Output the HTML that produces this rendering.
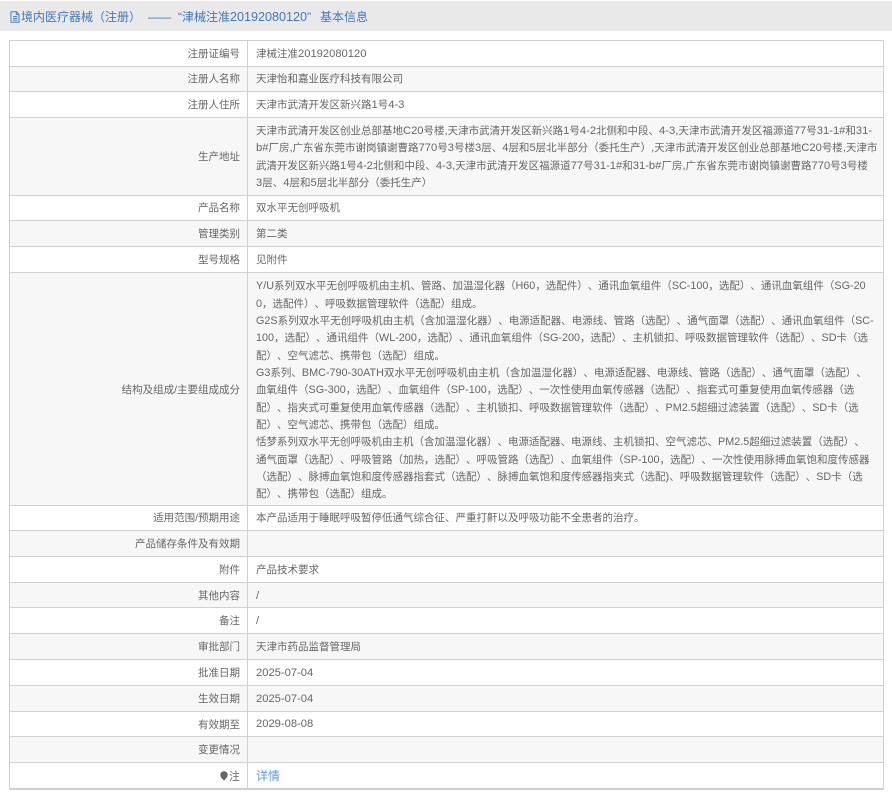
<!DOCTYPE html>
<html lang="zh">
<head>
<meta charset="utf-8">
<style>
html,body{margin:0;padding:0;background:#fff;}
body{width:892px;height:799px;position:relative;overflow:hidden;font-family:"Liberation Sans","Noto Sans CJK SC",sans-serif;font-size:10.5px;color:#666;text-spacing-trim:space-all;}
.head{position:absolute;left:0;top:1px;width:892px;height:30px;background:#e9e9e9;}
.head div{position:absolute;top:1px;line-height:30px;font-size:12px;color:#3f79bb;white-space:nowrap;}
.head i{font-size:12.6px;}
.head svg{position:absolute;left:10px;top:10px;}
.r{position:absolute;left:9px;width:875px;box-sizing:border-box;border:1px solid #d0d0d0;border-bottom:0;background:#fff;}
.r.g{background:#f7f7f7;}
.l{position:absolute;left:0;top:0;bottom:0;width:237px;border-right:1px solid #d0d0d0;white-space:nowrap;display:flex;align-items:center;justify-content:flex-end;}
.l span{margin-right:7px;}
.v{position:absolute;left:246px;top:0;bottom:0;display:flex;align-items:center;white-space:nowrap;}
.s .l span,.s .v>*{position:relative;top:-1px;}
.v .p{position:relative;top:1px;}
.m{display:block;line-height:17.33px;white-space:nowrap;}
i{font-style:normal;font-size:11.2px;line-height:1;}
b{font-weight:normal;font-size:10.8px;line-height:1;}
.bot{position:absolute;left:9px;top:788px;width:875px;height:2px;background:#cfcfcf;}
a{color:#5b9bec;text-decoration:none;font-size:12px;}
</style>
</head>
<body>
<div class="head">
<svg width="10" height="12" viewBox="0 0 10 12"><path d="M1 .8h5.500L9 3.300v7.900H1zM6.300 1v2.500H9M3 5.500h4.200M3 7.500h4.200M3 9.300h4.200" fill="none" stroke="#4a80bd" stroke-width="1"/></svg>
<div style="left:21px">境内医疗器械（注册）</div>
<div style="left:148px;letter-spacing:-1px">——</div>
<div style="left:178px">“津械注准<i>20192080120</i>”</div>
<div style="left:320px">基本信息</div>
</div>

<div class="r" style="top:40px;height:26px"><div class="l"><span>注册证编号</span></div><div class="v"><span>津械注准<i>20192080120</i></span></div></div>
<div class="r g s" style="top:66px;height:25px"><div class="l"><span>注册人名称</span></div><div class="v"><span>天津怡和嘉业医疗科技有限公司</span></div></div>
<div class="r" style="top:91px;height:26px"><div class="l"><span>注册人住所</span></div><div class="v"><span>天津市武清开发区新兴路<i>1</i>号<i>4-3</i></span></div></div>
<div class="r g" style="top:117px;height:78px"><div class="l"><span>生产地址</span></div><div class="v"><div style="position:relative;top:1px">
<span class="m">天津市武清开发区创业总部基地<i>C20</i>号楼<i>,</i>天津市武清开发区新兴路<i>1</i>号<i>4-2</i>北侧和中段、<i>4-3,</i>天津市武清开发区福源道<i>77</i>号<i>31-1#</i>和<i>31-</i></span>
<span class="m"><i>b#</i>厂房<i>,</i>广东省东莞市谢岗镇谢曹路<i>770</i>号<i>3</i>号楼<i>3</i>层、<i>4</i>层和<i>5</i>层北半部分（委托生产）<i>,</i>天津市武清开发区创业总部基地<i>C20</i>号楼<i>,</i>天津市</span>
<span class="m">武清开发区新兴路<i>1</i>号<i>4-2</i>北侧和中段、<i>4-3,</i>天津市武清开发区福源道<i>77</i>号<i>31-1#</i>和<i>31-b#</i>厂房<i>,</i>广东省东莞市谢岗镇谢曹路<i>770</i>号<i>3</i>号楼</span>
<span class="m"><i>3</i>层、<i>4</i>层和<i>5</i>层北半部分（委托生产）</span>
</div></div></div>
<div class="r s" style="top:195px;height:25px"><div class="l"><span>产品名称</span></div><div class="v"><span>双水平无创呼吸机</span></div></div>
<div class="r g" style="top:220px;height:26px"><div class="l"><span>管理类别</span></div><div class="v"><span>第二类</span></div></div>
<div class="r" style="top:246px;height:26px"><div class="l"><span>型号规格</span></div><div class="v"><span>见附件</span></div></div>
<div class="r g" style="top:272px;height:233px"><div class="l"><span>结构及组成/主要组成成分</span></div><div class="v"><div style="position:relative;top:2px">
<span class="m"><b>Y/U</b>系列双水平无创呼吸机由主机、管路、加温湿化器（<b>H60</b>，选配件）、通讯血氧组件（<b>SC-100</b>，选配）、通讯血氧组件（<b>SG-20</b></span>
<span class="m"><b>0</b>，选配件）、呼吸数据管理软件（选配）组成。</span>
<span class="m"><b>G2S</b>系列双水平无创呼吸机由主机（含加温湿化器）、电源适配器、电源线、管路（选配）、通气面罩（选配）、通讯血氧组件（<b>SC-</b></span>
<span class="m"><b>100</b>，选配）、通讯组件（<b>WL-200</b>，选配）、通讯血氧组件（<b>SG-200</b>，选配）、主机锁扣、呼吸数据管理软件（选配）、<b>SD</b>卡（选</span>
<span class="m">配）、空气滤芯、携带包（选配）组成。</span>
<span class="m"><b>G3</b>系列、<b>BMC-790-30ATH</b>双水平无创呼吸机由主机（含加温湿化器）、电源适配器、电源线、管路（选配）、通气面罩（选配）、</span>
<span class="m">血氧组件（<b>SG-300</b>，选配）、血氧组件（<b>SP-100</b>，选配）、一次性使用血氧传感器（选配）、指套式可重复使用血氧传感器（选</span>
<span class="m">配）、指夹式可重复使用血氧传感器（选配）、主机锁扣、呼吸数据管理软件（选配）、<b>PM2.5</b>超细过滤装置（选配）、<b>SD</b>卡（选</span>
<span class="m">配）、空气滤芯、携带包（选配）组成。</span>
<span class="m">恬梦系列双水平无创呼吸机由主机（含加温湿化器）、电源适配器、电源线、主机锁扣、空气滤芯、<b>PM2.5</b>超细过滤装置（选配）、</span>
<span class="m">通气面罩（选配）、呼吸管路（加热，选配）、呼吸管路（选配）、血氧组件（<b>SP-100</b>，选配）、一次性使用脉搏血氧饱和度传感器</span>
<span class="m">（选配）、脉搏血氧饱和度传感器指套式（选配）、脉搏血氧饱和度传感器指夹式（选配<i>)</i>、呼吸数据管理软件（选配）、<b>SD</b>卡（选</span>
<span class="m">配）、携带包（选配）组成。</span>
</div></div></div>
<div class="r s" style="top:505px;height:25px"><div class="l"><span>适用范围/预期用途</span></div><div class="v"><span>本产品适用于睡眠呼吸暂停低通气综合征、严重打鼾以及呼吸功能不全患者的治疗。</span></div></div>
<div class="r g" style="top:530px;height:26px"><div class="l"><span>产品储存条件及有效期</span></div><div class="v"></div></div>
<div class="r" style="top:556px;height:26px"><div class="l"><span>附件</span></div><div class="v"><span>产品技术要求</span></div></div>
<div class="r g" style="top:582px;height:25px"><div class="l"><span>其他内容</span></div><div class="v"><span class="p"><i>/</i></span></div></div>
<div class="r" style="top:607px;height:26px"><div class="l"><span>备注</span></div><div class="v"><span class="p"><i>/</i></span></div></div>
<div class="r g" style="top:633px;height:26px"><div class="l"><span>审批部门</span></div><div class="v"><span>天津市药品监督管理局</span></div></div>
<div class="r" style="top:659px;height:26px"><div class="l"><span>批准日期</span></div><div class="v"><span class="p"><i>2025-07-04</i></span></div></div>
<div class="r g" style="top:685px;height:26px"><div class="l"><span>生效日期</span></div><div class="v"><span class="p"><i>2025-07-04</i></span></div></div>
<div class="r" style="top:711px;height:25px"><div class="l"><span>有效期至</span></div><div class="v"><span><i>2029-08-08</i></span></div></div>
<div class="r g" style="top:736px;height:26px"><div class="l"><span>变更情况</span></div><div class="v"></div></div>
<div class="r" style="top:762px;height:26px"><div class="l"><span style="display:flex;align-items:center;font-size:11px"><svg width="8" height="10" viewBox="0 0 8 10" style="margin-right:1px"><path d="M4 9.800C3.200 8.500.3 6.600.3 3.900A3.700 3.700 0 0 1 7.700 3.900C7.700 6.600 4.800 8.500 4 9.800Z" fill="#666"/></svg>注</span></div><div class="v"><a>详情</a></div></div>
<div class="bot"></div>
</body>
</html>
